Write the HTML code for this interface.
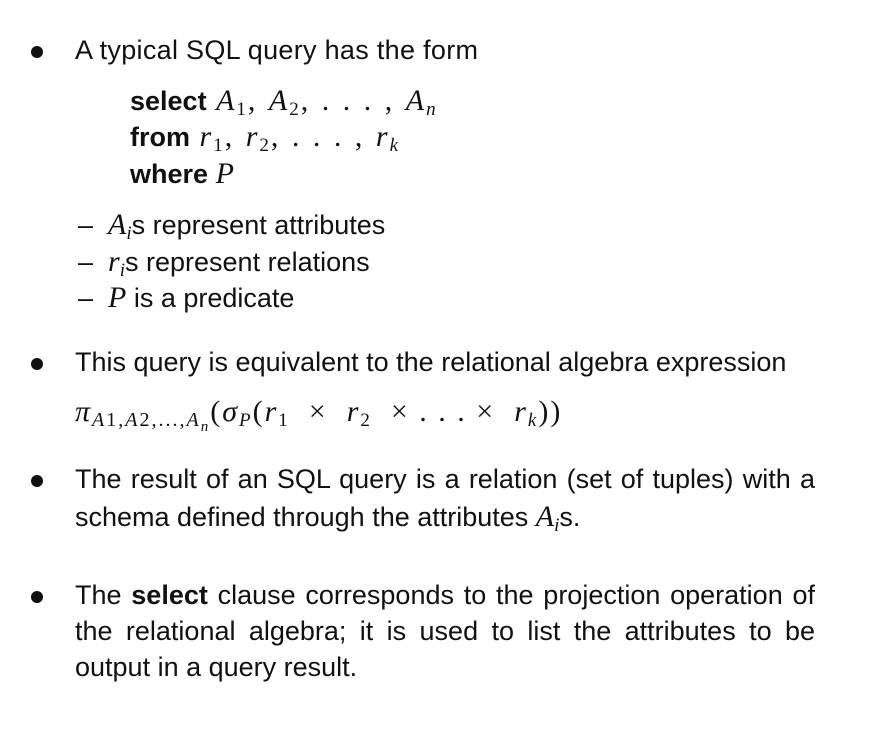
<!DOCTYPE html><html><head><style>
body{margin:0;width:892px;height:730px;background:#fff;position:relative;overflow:hidden;font-family:"Liberation Sans",sans-serif;font-size:27px;color:#111}
.l{position:absolute;line-height:27px;white-space:nowrap}
.j{width:740px;text-align:justify;text-align-last:justify}
.m{font-family:"Liberation Serif",serif;font-style:italic;font-size:30px}
.r{font-family:"Liberation Serif",serif;font-size:30px}
sub{font-size:19px;vertical-align:-5px;line-height:0;font-style:normal;font-family:"Liberation Serif",serif}
sub.i{font-style:italic}
.b{position:absolute;width:12px;height:12px;border-radius:50%;background:#111}
.f{letter-spacing:2px}
.f .r{letter-spacing:3px}
</style></head><body>
<div class="b" style="left:31px;top:46px"></div>
<div class="l" style="left:75px;top:37px;letter-spacing:0.3px">A typical SQL query has the form</div>
<div class="l f" style="left:130px;top:87px"><b style="letter-spacing:0">select</b> <span class="m">A</span><sub>1</sub><span class="r">, </span><span class="m">A</span><sub>2</sub><span class="r">, . . . , </span><span class="m">A<sub class="i">n</sub></span></div>
<div class="l f" style="left:130px;top:123px"><b style="letter-spacing:0">from</b> <span class="m">r</span><sub>1</sub><span class="r">, </span><span class="m">r</span><sub>2</sub><span class="r">, . . . , </span><span class="m">r<sub class="i">k</sub></span></div>
<div class="l" style="left:130px;top:160px"><b>where</b> <span class="m">P</span></div>
<div class="l" style="left:78px;top:211px">–&nbsp;&nbsp;<span class="m">A<sub class="i">i</sub></span>s represent attributes</div>
<div class="l" style="left:78px;top:248px">–&nbsp;&nbsp;<span class="m">r<sub class="i">i</sub></span>s represent relations</div>
<div class="l" style="left:78px;top:284px">–&nbsp;&nbsp;<span class="m">P</span> is a predicate</div>
<div class="b" style="left:31px;top:358px"></div>
<div class="l" style="left:75px;top:349px">This query is equivalent to the relational algebra expression</div>
<div class="l" style="left:75px;top:398px;letter-spacing:2px"><span class="m">π</span><sub style="font-size:20px"><i>A</i>1,<i>A</i>2,...,<i>A<sub style="font-size:15px" class="i">n</sub></i></sub><span class="r">(</span><span class="m">σ<sub class="i">P</sub></span><span class="r">(</span><span class="m">r</span><sub>1</sub><span class="r">&nbsp; × &nbsp;</span><span class="m">r</span><sub>2</sub><span class="r">&nbsp; × . . . × &nbsp;</span><span class="m">r<sub class="i">k</sub></span><span class="r">))</span></div>
<div class="b" style="left:31px;top:475px"></div>
<div class="l j" style="left:75px;top:466px">The result of an SQL query is a relation (set of tuples) with a</div>
<div class="l" style="left:75px;top:503px">schema defined through the attributes <span class="m">A<sub class="i">i</sub></span>s.</div>
<div class="b" style="left:31px;top:591px"></div>
<div class="l j" style="left:75px;top:582px">The <b>select</b> clause corresponds to the projection operation of</div>
<div class="l j" style="left:75px;top:618px">the relational algebra; it is used to list the attributes to be</div>
<div class="l" style="left:75px;top:654px">output in a query result.</div>
</body></html>
